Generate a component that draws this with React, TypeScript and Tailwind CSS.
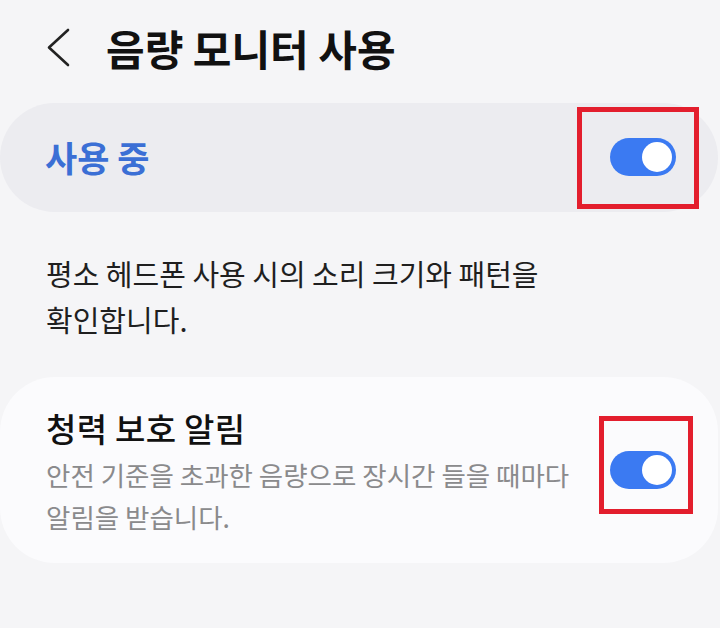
import React from "react";

function Toggle() {
  return (
    <div className="relative w-[66px] h-[38px] rounded-full bg-[#3b7af2]">
      <div className="absolute right-[4px] top-[4px] w-[30px] h-[30px] rounded-full bg-white" />
    </div>
  );
}

export default function App() {
  return (
    <div
      className="w-[720px] h-[628px] bg-[#f5f5f7] overflow-hidden"
      style={{ fontFamily: '"Noto Sans CJK KR", "Noto Sans", sans-serif' }}
    >
      <header className="flex items-center h-[96px]">
        <svg
          className="ml-[46px]"
          width="26"
          height="40"
          viewBox="0 0 26 40"
          fill="none"
        >
          <polyline
            points="22,2 3,19.5 22,37"
            stroke="#222222"
            strokeWidth="2.6"
            strokeLinecap="round"
            strokeLinejoin="round"
          />
        </svg>
        <h1 className="ml-[34px] text-[42px] font-bold text-[#111111] leading-none">
          음량 모니터 사용
        </h1>
      </header>

      <div className="mt-[7px] flex items-center justify-between h-[109px] w-[718px] rounded-[55px] bg-[#ececf0] pl-[45px] pr-[19px]">
        <span className="text-[35px] font-bold text-[#3b6fd5]">사용 중</span>
        <div className="w-[122px] h-[102px] border-[5px] border-[#e31e2d] pl-[28px] pt-[26px]">
          <Toggle />
        </div>
      </div>

      <p className="mt-[38px] pl-[46px] w-[626px] break-keep text-[29px] leading-[46px] text-[#1f1f1f]">
        평소 헤드폰 사용 시의 소리 크기와 패턴을 확인합니다.
      </p>

      <div className="mt-[35px] flex items-start justify-between h-[186px] w-[718px] rounded-[55px] bg-[#fbfbfd] pl-[46px] pr-[25px]">
        <div className="pt-[31px] flex-1 break-keep">
          <div className="text-[33px] leading-[40px] font-medium tracking-[0.3px] text-[#111111]">
            청력 보호 알림
          </div>
          <div className="mt-[6px] text-[26.5px] leading-[42px] text-[#8a8a8c]">
            안전 기준을 초과한 음량으로 장시간 들을 때마다 알림을 받습니다.
          </div>
        </div>
        <div className="mt-[39px] w-[94px] h-[98px] border-[5px] border-[#e31e2d] pl-[6px] pt-[30px]">
          <Toggle />
        </div>
      </div>
    </div>
  );
}
